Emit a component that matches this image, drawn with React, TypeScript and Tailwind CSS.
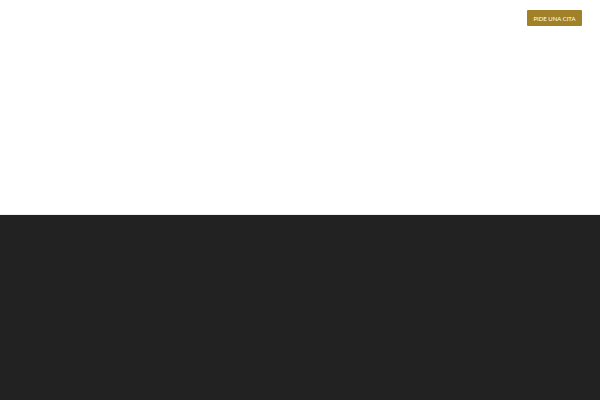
export default function App() {
  return (
    <div className="w-[600px] h-[400px] flex flex-col bg-white" style={{ fontFamily: 'Lato, "Liberation Sans", sans-serif' }}>
      <header className="h-[215px] flex justify-end items-start pt-[10px] pr-[18px] border-b border-[#eeeeee]">
        <button type="button" className="w-[55px] h-[16px] bg-[#a08128] text-white text-[6px] uppercase flex items-center justify-center rounded-[1px]">
          Pide una cita
        </button>
      </header>
      <div className="flex-1 bg-[#222222]" />
    </div>
  )
}
